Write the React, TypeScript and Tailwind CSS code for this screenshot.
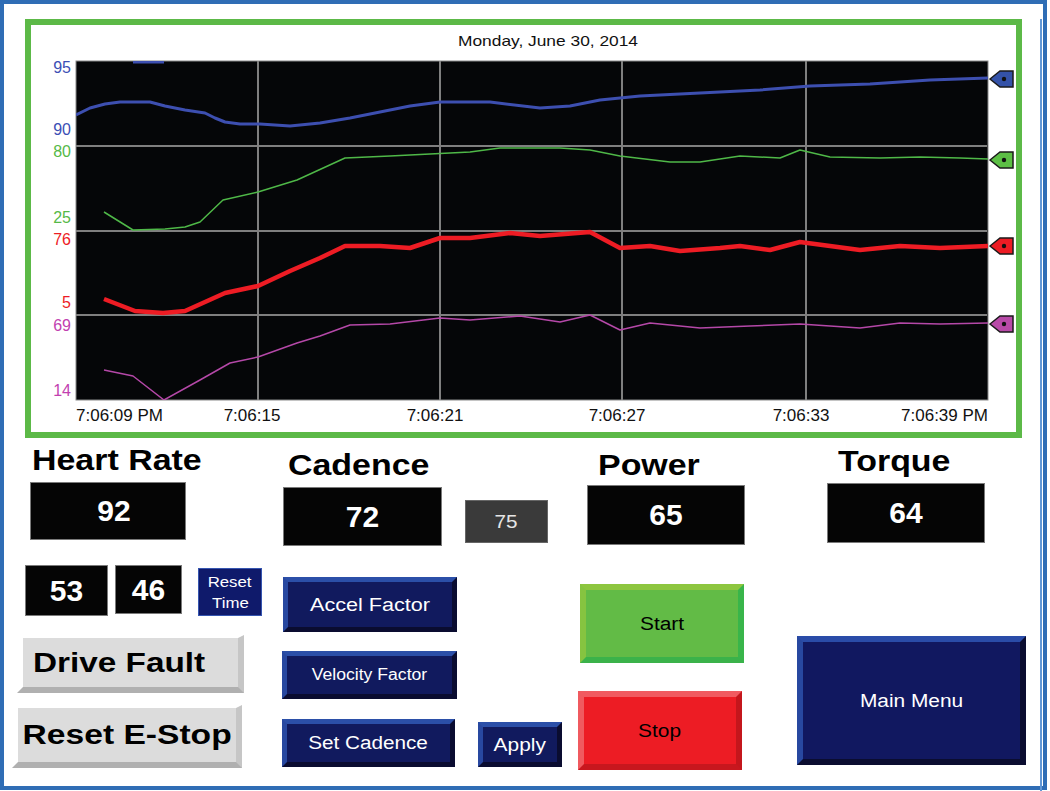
import React from "react";

type Pt = [number, number];

const bluePts: Pt[] = [
  [76, 115], [90, 108], [105, 104], [120, 102], [150, 102], [165, 106], [185, 110], [205, 113],
  [215, 118], [225, 122], [240, 124], [260, 124], [290, 126], [320, 123], [350, 118], [380, 112],
  [410, 106], [440, 102], [490, 102], [540, 108], [570, 106], [600, 100], [640, 96], [700, 93],
  [760, 90], [810, 86], [870, 84], [930, 80], [988, 78],
];

const greenPts: Pt[] = [
  [104, 212], [133, 230], [165, 229], [185, 227], [200, 222], [223, 200], [258, 192], [297, 180],
  [345, 158], [390, 156], [430, 154], [470, 152], [500, 148], [560, 148], [590, 150], [620, 156],
  [670, 162], [700, 162], [740, 156], [780, 158], [800, 150], [830, 157], [880, 158], [920, 157],
  [960, 158], [988, 159],
];

const redPts: Pt[] = [
  [104, 299], [135, 311], [163, 313], [185, 311], [205, 302], [225, 293], [258, 286], [290, 271],
  [320, 258], [345, 246], [380, 246], [410, 248], [440, 238], [470, 238], [510, 233], [540, 236],
  [590, 232], [620, 248], [650, 246], [680, 251], [720, 248], [740, 246], [770, 250], [800, 242],
  [830, 246], [860, 250], [900, 246], [940, 248], [988, 246],
];

const magentaPts: Pt[] = [
  [104, 370], [133, 376], [164, 400], [200, 380], [230, 363], [258, 357], [297, 343], [320, 336],
  [350, 325], [390, 324], [440, 318], [470, 320], [520, 316], [560, 322], [590, 315], [620, 330],
  [650, 323], [700, 328], [750, 326], [800, 324], [830, 326], [860, 328], [900, 323], [940, 324],
  [988, 323],
];

const toStr = (pts: Pt[]) => pts.map((p) => p.join(",")).join(" ");

const yLabels = [
  { t: "95", y: 73, c: "#3c4fb5" },
  { t: "90", y: 135, c: "#3c4fb5" },
  { t: "80", y: 157, c: "#55b947" },
  { t: "25", y: 223, c: "#55b947" },
  { t: "76", y: 245, c: "#ed1c24" },
  { t: "5", y: 308, c: "#ed1c24" },
  { t: "69", y: 331, c: "#c23fb0" },
  { t: "14", y: 396, c: "#c23fb0" },
];

const markers = [
  { y: 79, c: "#3452a8" },
  { y: 160, c: "#5cbf45" },
  { y: 246, c: "#ed1c24" },
  { y: 324, c: "#b84aa8" },
];

function Chart() {
  return (
    <svg width={985} height={407} viewBox="31 25 985 407" className="block">
      <defs>
        <clipPath id="plot">
          <rect x={76} y={61} width={912} height={339} />
        </clipPath>
      </defs>
      <text
        x={458}
        y={46}
        fontSize={15}
        fill="#111"
        textLength={180}
        lengthAdjust="spacingAndGlyphs"
        fontFamily="Liberation Sans, Arial, sans-serif"
      >
        Monday, June 30, 2014
      </text>
      <rect x={76} y={61} width={912} height={339} fill="#050608" stroke="#8a8a8a" strokeWidth={1} />
      {[258, 440, 622, 806].map((x) => (
        <line key={x} x1={x} y1={61} x2={x} y2={400} stroke="#7f7f7f" strokeWidth={2} />
      ))}
      {[146, 231, 315].map((y) => (
        <line key={y} x1={76} y1={y} x2={987} y2={y} stroke="#7f7f7f" strokeWidth={2} />
      ))}
      <g clipPath="url(#plot)" fill="none" strokeLinejoin="round">
        <line x1={133} y1={62} x2={164} y2={62} stroke="#3d4fb0" strokeWidth={3} />
        <polyline points={toStr(bluePts)} stroke="#3d4fb0" strokeWidth={3} />
        <polyline points={toStr(greenPts)} stroke="#4fb848" strokeWidth={1.5} />
        <polyline points={toStr(redPts)} stroke="#ee1c24" strokeWidth={4.5} />
        <polyline points={toStr(magentaPts)} stroke="#b548a8" strokeWidth={1.5} />
      </g>
      <g fontFamily="Liberation Sans, Arial, sans-serif" fontSize={16}>
        {yLabels.map((l) => (
          <text key={l.t + l.y} x={71} y={l.y} textAnchor="end" fill={l.c}>
            {l.t}
          </text>
        ))}
      </g>
      <g fontFamily="Liberation Sans, Arial, sans-serif" fontSize={17} fill="#111">
        <text x={76} y={421}>7:06:09 PM</text>
        <text x={252} y={421} textAnchor="middle">7:06:15</text>
        <text x={435} y={421} textAnchor="middle">7:06:21</text>
        <text x={617} y={421} textAnchor="middle">7:06:27</text>
        <text x={801} y={421} textAnchor="middle">7:06:33</text>
        <text x={988} y={421} textAnchor="end">7:06:39 PM</text>
      </g>
      {markers.map((m) => (
        <g key={m.y}>
          <polygon
            points={`990,${m.y} 1000,${m.y - 8} 1013,${m.y - 8} 1013,${m.y + 8} 1000,${m.y + 8}`}
            fill={m.c}
            stroke="#1a1a1a"
            strokeWidth={1.5}
          />
          <circle cx={1004} cy={m.y} r={2.2} fill="#111" />
        </g>
      ))}
    </svg>
  );
}

function Heading({ text, className }: { text: string; className: string }) {
  return (
    <div className={"h-[29px] text-[29px] leading-none font-bold text-black whitespace-nowrap " + className}>
      <span className="inline-block origin-left scale-x-[1.17]">{text}</span>
    </div>
  );
}

function ValueBox({ value, className }: { value: string; className: string }) {
  return (
    <div
      className={
        "flex items-center justify-center bg-[#050505] border border-[#7a7a7a] text-white font-bold text-[30px] leading-none " +
        className
      }
    >
      {value}
    </div>
  );
}

const blueBevel =
  "flex items-center justify-center bg-[#111a5e] border-[5px] border-t-[#2b4fa8] border-l-[#2848a0] border-r-[#0a0c30] border-b-[#0a0c30] text-white leading-none whitespace-nowrap";

const grayBevel =
  "flex items-center bg-[#dcdcdc] bg-clip-padding border-t-[3px] border-l-[6px] border-r-[6px] border-b-[6px] border-t-transparent border-l-transparent border-r-[#c6c6c6] border-b-[#b0b0b0] text-black font-bold text-[28px] leading-none whitespace-nowrap";

export default function App() {
  return (
    <div className="w-[1050px] h-[791px] bg-white overflow-hidden font-['Liberation_Sans',Arial,sans-serif]">
      <div className="w-[1047px] h-[790px] border-4 border-[#2f6db5] pr-px pb-px">
        <div className="w-full h-full border-r-2 border-b-2 border-[#6197d6]">
          {/* trend frame */}
          <div className="ml-[21px] mt-[15px] w-[997px] h-[419px] border-[6px] border-[#5cb947]">
            <Chart />
          </div>

          {/* lower panel */}
          <div className="flex">
            {/* heart rate column */}
            <div className="ml-[8px] w-[250px] flex flex-col">
              <Heading text="Heart Rate" className="mt-[8px] ml-[20px]" />
              <ValueBox value="92" className="mt-[7px] ml-[18px] w-[156px] h-[58px] pl-[12px]" />
              <div className="mt-[25px] flex items-start">
                <ValueBox value="53" className="ml-[13px] w-[83px] h-[51px]" />
                <ValueBox value="46" className="ml-[7px] w-[67px] h-[49px]" />
                <div className="ml-[16px] mt-[3px] w-[64px] h-[48px] flex flex-col items-center justify-center bg-[#0f1a6b] border border-[#3555b0] text-white text-[15px] leading-[21px]">
                  <span className="inline-block scale-x-[1.12]">Reset</span>
                  <span className="inline-block scale-x-[1.12]">Time</span>
                </div>
              </div>
              <div className={grayBevel + " mt-[19px] ml-[5px] w-[227px] h-[58px] pl-[10px]"}>
                <span className="inline-block origin-left scale-x-[1.19]">Drive Fault</span>
              </div>
              <div className={grayBevel + " mt-[12px] w-[230px] h-[63px] justify-center"}>
                <span className="inline-block scale-x-[1.2]">Reset E-Stop</span>
              </div>
            </div>

            {/* cadence column */}
            <div className="ml-[20px] w-[280px] flex flex-col">
              <Heading text="Cadence" className="mt-[13px] ml-[6px]" />
              <div className="mt-[7px] flex items-start">
                <ValueBox value="72" className="ml-px w-[159px] h-[59px]" />
                <div className="ml-[23px] mt-[13px] w-[83px] h-[43px] flex items-center justify-center bg-[#3a3a3a] border border-[#666] text-[#e6e6e6] text-[18px] leading-none">
                  <span className="inline-block scale-x-[1.15]">75</span>
                </div>
              </div>
              <div className={blueBevel + " mt-[31px] ml-px w-[174px] h-[55px] text-[18px]"}>
                <span className="inline-block scale-x-[1.2]">Accel Factor</span>
              </div>
              <div className={blueBevel + " mt-[19px] w-[175px] h-[48px] text-[16px]"}>
                <span className="inline-block scale-x-[1.1]">Velocity Factor</span>
              </div>
              <div className="mt-[20px] flex items-start">
                <div className={blueBevel + " w-[173px] h-[48px] text-[18px]"}>
                  <span className="inline-block scale-x-[1.15]">Set Cadence</span>
                </div>
                <div className={blueBevel + " ml-[23px] mt-[3px] w-[84px] h-[45px] text-[19px]"}>
                  <span className="inline-block scale-x-[1.1]">Apply</span>
                </div>
              </div>
            </div>

            {/* power column */}
            <div className="ml-[16px] w-[167px] flex flex-col">
              <Heading text="Power" className="mt-[13px] ml-[20px]" />
              <ValueBox value="65" className="mt-[5px] ml-[9px] w-[158px] h-[60px]" />
              <div className="mt-[39px] ml-[2px] w-[164px] h-[79px] flex items-center justify-center bg-[#62bb46] border-[6px] border-t-[#8dc63f] border-l-[#86c440] border-r-[#39b54a] border-b-[#3bb24a] text-black text-[18px] leading-none">
                <span className="inline-block scale-x-[1.16]">Start</span>
              </div>
              <div className="mt-[28px] w-[164px] h-[79px] flex items-center justify-center bg-[#ed1c24] border-[6px] border-t-[#f15a60] border-l-[#f05a5f] border-r-[#c4161c] border-b-[#c8171e] text-black text-[18px] leading-none">
                <span className="inline-block scale-x-[1.16]">Stop</span>
              </div>
            </div>

            {/* torque column */}
            <div className="ml-[52px] w-[229px] flex flex-col">
              <Heading text="Torque" className="mt-[9px] ml-[41px]" />
              <ValueBox value="64" className="mt-[7px] ml-[30px] w-[158px] h-[60px]" />
              <div className="mt-[93px] w-[229px] h-[129px] flex items-center justify-center bg-[#111860] border-[6px] border-t-[#2a4ca8] border-l-[#2848a0] border-r-[#0b0d30] border-b-[#0b0d30] text-white text-[18px] leading-none">
                <span className="inline-block scale-x-[1.16]">Main Menu</span>
              </div>
            </div>
          </div>
        </div>
      </div>
    </div>
  );
}
